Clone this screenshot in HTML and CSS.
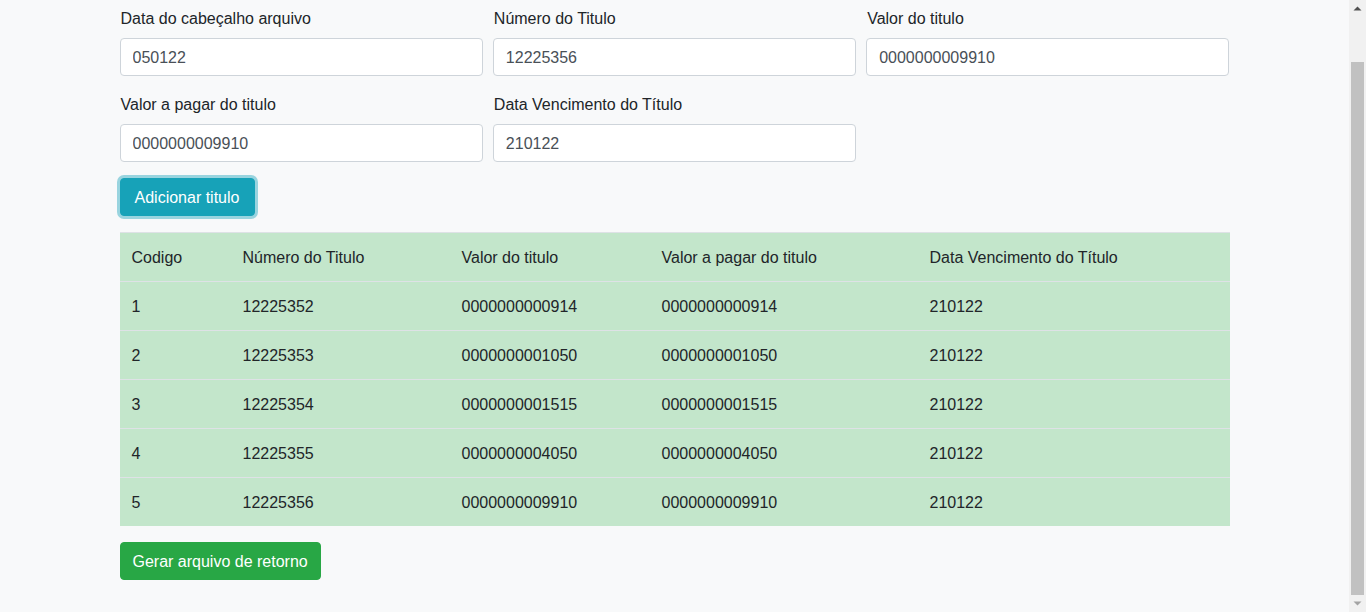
FILE: index.html
```html
<!DOCTYPE html>
<html lang="pt-BR">
<head>
<meta charset="utf-8">
<title>Títulos</title>
<link rel="stylesheet" href="styles.css">
</head>
<body>
<div class="page">
  <div class="container">
    <form class="form">
      <div class="form-row">
        <div class="form-group">
          <label class="label">Data do cabeçalho arquivo</label>
          <input class="input" type="text" value="050122">
        </div>
        <div class="form-group">
          <label class="label">Número do Titulo</label>
          <input class="input" type="text" value="12225356">
        </div>
        <div class="form-group">
          <label class="label">Valor do titulo</label>
          <input class="input" type="text" value="0000000009910">
        </div>
      </div>
      <div class="form-row">
        <div class="form-group">
          <label class="label">Valor a pagar do titulo</label>
          <input class="input" type="text" value="0000000009910">
        </div>
        <div class="form-group">
          <label class="label">Data Vencimento do Título</label>
          <input class="input" type="text" value="210122">
        </div>
        <div class="form-group"></div>
      </div>
      <div class="actions">
        <button type="button" class="btn btn-info">Adicionar titulo</button>
      </div>
    </form>

    <table class="table">
      <colgroup>
        <col class="c1"><col class="c2"><col class="c3"><col class="c4"><col class="c5">
      </colgroup>
      <thead>
        <tr><td>Codigo</td><td>Número do Titulo</td><td>Valor do titulo</td><td>Valor a pagar do titulo</td><td>Data Vencimento do Título</td></tr>
      </thead>
      <tbody>
        <tr><td>1</td><td>12225352</td><td>0000000000914</td><td>0000000000914</td><td>210122</td></tr>
        <tr><td>2</td><td>12225353</td><td>0000000001050</td><td>0000000001050</td><td>210122</td></tr>
        <tr><td>3</td><td>12225354</td><td>0000000001515</td><td>0000000001515</td><td>210122</td></tr>
        <tr><td>4</td><td>12225355</td><td>0000000004050</td><td>0000000004050</td><td>210122</td></tr>
        <tr><td>5</td><td>12225356</td><td>0000000009910</td><td>0000000009910</td><td>210122</td></tr>
      </tbody>
    </table>

    <button type="button" class="btn btn-success">Gerar arquivo de retorno</button>
  </div>
</div>
<div class="scrollbar">
  <div class="sb-btn">
    <svg width="9" height="5" viewBox="0 0 9 5"><polygon points="0.5,4.5 4.5,0.5 8.5,4.5" fill="#505050"/></svg>
  </div>
  <div class="sb-track"><div class="sb-thumb"></div></div>
  <div class="sb-btn">
    <svg width="9" height="5" viewBox="0 0 9 5"><polygon points="0.5,0.5 8.5,0.5 4.5,4.5" fill="#a3a3a3"/></svg>
  </div>
</div>
</body>
</html>
```

FILE: styles.css
```css
* { box-sizing: border-box; }

html, body {
  margin: 0;
  height: 612px;
  overflow: hidden;
}

body {
  display: flex;
  background: #f8f9fa;
  font-family: "Liberation Sans", Arial, sans-serif;
  font-size: 16px;
  line-height: 24px;
  color: #212529;
}

.page {
  flex: 1;
  min-width: 0;
}

.container {
  width: 1110px;
  margin: 0 auto;
  padding-top: 6px;
}

.form-row {
  display: flex;
  gap: 10px;
}

.form-group {
  flex: 1;
  min-width: 0;
  display: flex;
  flex-direction: column;
  margin-bottom: 16px;
}

.label {
  display: block;
  padding-top: 1px;
  padding-left: 1px;
  margin-bottom: 7px;
  line-height: 24px;
}

.input {
  display: block;
  width: 100%;
  height: 38px;
  padding: 7px 12px 5px;
  font: inherit;
  line-height: 24px;
  color: #495057;
  background: #fff;
  border: 1px solid #ced4da;
  border-radius: 4px;
}

.actions {
  margin-bottom: 16px;
}

.btn {
  display: inline-block;
  font: inherit;
  line-height: 24px;
  padding: 7px 12px 5px;
  border: 1px solid transparent;
  border-radius: 4px;
  color: #fff;
  cursor: pointer;
}

.btn-info {
  background: #17a2b8;
  border-color: #17a2b8;
  padding-right: 13px;
  padding-left: 13px;
  width: 135px;
  text-align: center;
  box-shadow: 0 0 0 3px rgba(58, 176, 195, 0.5);
}

.btn-success {
  background: #28a745;
  border-color: #28a745;
}

.table {
  width: 100%;
  table-layout: fixed;
  border-collapse: collapse;
  background: #c3e6cb;
  margin-bottom: 16px;
}

.table td {
  padding: 13px 12px 11px;
  border-top: 1px solid #dee2e6;
  vertical-align: top;
  white-space: nowrap;
}

.c1 { width: 111px; }
.c2 { width: 219px; }
.c3 { width: 200px; }
.c4 { width: 268px; }

.scrollbar {
  width: 17px;
  flex: none;
  display: flex;
  flex-direction: column;
  background: #f1f1f1;
}

.sb-btn {
  height: 17px;
  display: flex;
  align-items: center;
  justify-content: center;
}

.sb-track {
  flex: 1;
  padding-top: 45px;
}

.sb-thumb {
  height: 533px;
  margin: 0 2px;
  background: #c1c1c1;
}
```
